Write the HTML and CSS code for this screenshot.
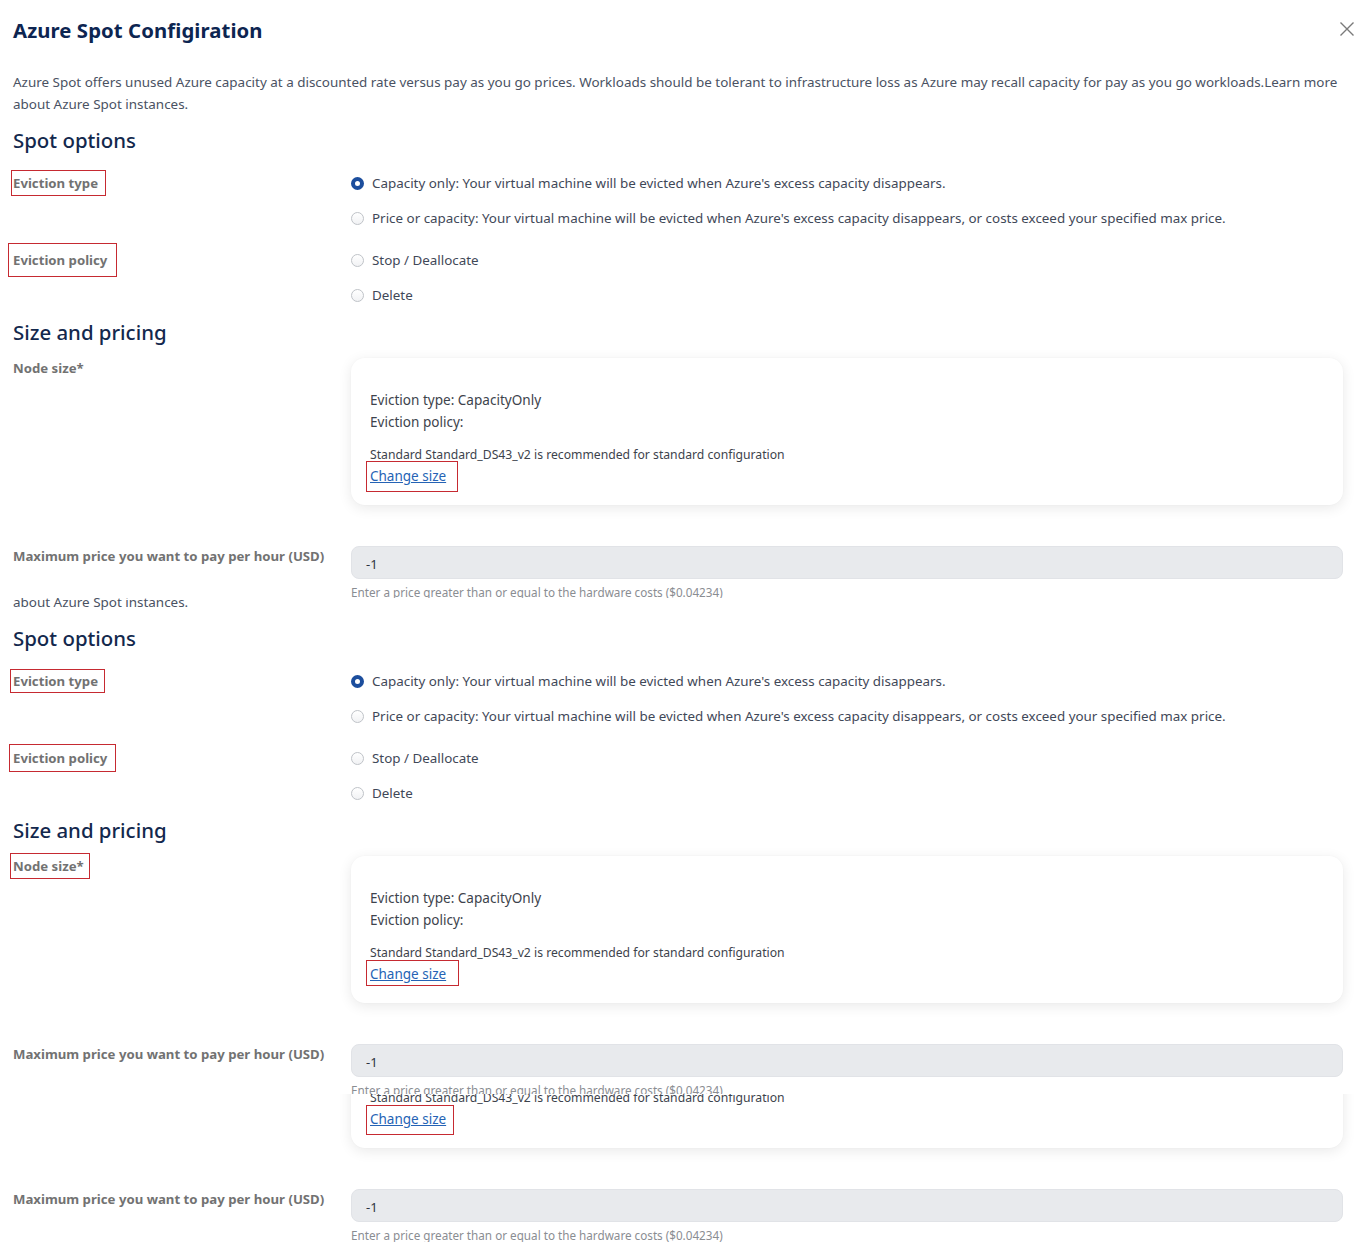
FILE: index.html
```html
<!DOCTYPE html>
<html lang="en">
<head>
<meta charset="utf-8">
<title>Azure Spot Configiration</title>
<link rel="stylesheet" href="styles.css">
</head>
<body>
<div class="shot">

  <!-- slice 1 -->
  <section class="slice slice-1">
    <div class="page">
      <header class="top">
        <h1 class="title">Azure Spot Configiration</h1>
        <button class="close" aria-label="Close">
          <svg width="16" height="16" viewBox="0 0 16 16"><path d="M1.5 1.5 L14.5 14.5 M14.5 1.5 L1.5 14.5" stroke="#7a7a7a" stroke-width="1.4" fill="none"/></svg>
        </button>
      </header>
      <p class="desc">Azure Spot offers unused Azure capacity at a discounted rate versus pay as you go prices. Workloads should be tolerant to infrastructure loss as Azure may recall capacity for pay as you go workloads.Learn more about Azure Spot instances.</p>

      <h2 class="section">Spot options</h2>
      <div class="row">
        <div class="label"><span class="mark mark-type">Eviction type</span></div>
        <div class="ctrl options">
          <label class="opt"><span class="radio on"></span>Capacity only: Your virtual machine will be evicted when Azure's excess capacity disappears.</label>
          <label class="opt"><span class="radio"></span>Price or capacity: Your virtual machine will be evicted when Azure's excess capacity disappears, or costs exceed your specified max price.</label>
        </div>
      </div>
      <div class="row row-policy">
        <div class="label"><span class="mark mark-policy">Eviction policy</span></div>
        <div class="ctrl options">
          <label class="opt"><span class="radio"></span>Stop / Deallocate</label>
          <label class="opt"><span class="radio"></span>Delete</label>
        </div>
      </div>

      <h2 class="section section-size">Size and pricing</h2>
      <div class="row row-node">
        <div class="label"><span class="plain">Node size*</span></div>
        <div class="ctrl">
          <div class="card">
            <p class="card-line">Eviction type: CapacityOnly</p>
            <p class="card-line">Eviction policy:</p>
            <p class="card-rec">Standard Standard_DS43_v2 is recommended for standard configuration</p>
            <span class="mark mark-link mark-link-a"><a class="link" href="#">Change size</a></span>
          </div>
        </div>
      </div>
      <div class="row row-price">
        <div class="label"><span class="plain">Maximum price you want to pay per hour (USD)</span></div>
        <div class="ctrl">
          <div class="input">-1</div>
          <p class="help">Enter a price greater than or equal to the hardware costs ($0.04234)</p>
        </div>
      </div>
    </div>
  </section>

  <!-- slice 2 -->
  <section class="slice slice-2">
    <div class="page">
      <header class="top">
        <h1 class="title">Azure Spot Configiration</h1>
      </header>
      <p class="desc">Azure Spot offers unused Azure capacity at a discounted rate versus pay as you go prices. Workloads should be tolerant to infrastructure loss as Azure may recall capacity for pay as you go workloads.Learn more about Azure Spot instances.</p>

      <h2 class="section">Spot options</h2>
      <div class="row">
        <div class="label"><span class="mark mark-type mark-type-b">Eviction type</span></div>
        <div class="ctrl options">
          <label class="opt"><span class="radio on"></span>Capacity only: Your virtual machine will be evicted when Azure's excess capacity disappears.</label>
          <label class="opt"><span class="radio"></span>Price or capacity: Your virtual machine will be evicted when Azure's excess capacity disappears, or costs exceed your specified max price.</label>
        </div>
      </div>
      <div class="row row-policy">
        <div class="label"><span class="mark mark-policy mark-policy-b">Eviction policy</span></div>
        <div class="ctrl options">
          <label class="opt"><span class="radio"></span>Stop / Deallocate</label>
          <label class="opt"><span class="radio"></span>Delete</label>
        </div>
      </div>

      <h2 class="section section-size">Size and pricing</h2>
      <div class="row row-node">
        <div class="label"><span class="mark mark-node">Node size*</span></div>
        <div class="ctrl">
          <div class="card">
            <p class="card-line">Eviction type: CapacityOnly</p>
            <p class="card-line">Eviction policy:</p>
            <p class="card-rec">Standard Standard_DS43_v2 is recommended for standard configuration</p>
            <span class="mark mark-link mark-link-b"><a class="link" href="#">Change size</a></span>
          </div>
        </div>
      </div>
      <div class="row row-price">
        <div class="label"><span class="plain">Maximum price you want to pay per hour (USD)</span></div>
        <div class="ctrl">
          <div class="input">-1</div>
          <p class="help">Enter a price greater than or equal to the hardware costs ($0.04234)</p>
        </div>
      </div>
    </div>
  </section>

  <!-- slice 3 -->
  <section class="slice slice-3">
    <div class="page">
      <header class="top">
        <h1 class="title">Azure Spot Configiration</h1>
      </header>
      <p class="desc">Azure Spot offers unused Azure capacity at a discounted rate versus pay as you go prices. Workloads should be tolerant to infrastructure loss as Azure may recall capacity for pay as you go workloads.Learn more about Azure Spot instances.</p>

      <h2 class="section">Spot options</h2>
      <div class="row">
        <div class="label"><span class="plain">Eviction type</span></div>
        <div class="ctrl options">
          <label class="opt"><span class="radio on"></span>Capacity only: Your virtual machine will be evicted when Azure's excess capacity disappears.</label>
          <label class="opt"><span class="radio"></span>Price or capacity: Your virtual machine will be evicted when Azure's excess capacity disappears, or costs exceed your specified max price.</label>
        </div>
      </div>
      <div class="row row-policy">
        <div class="label"><span class="plain">Eviction policy</span></div>
        <div class="ctrl options">
          <label class="opt"><span class="radio"></span>Stop / Deallocate</label>
          <label class="opt"><span class="radio"></span>Delete</label>
        </div>
      </div>

      <h2 class="section section-size">Size and pricing</h2>
      <div class="row row-node">
        <div class="label"><span class="plain">Node size*</span></div>
        <div class="ctrl">
          <div class="card">
            <p class="card-line">Eviction type: CapacityOnly</p>
            <p class="card-line">Eviction policy:</p>
            <p class="card-rec">Standard Standard_DS43_v2 is recommended for standard configuration</p>
            <span class="mark mark-link mark-link-c"><a class="link" href="#">Change size</a></span>
          </div>
        </div>
      </div>
      <div class="row row-price">
        <div class="label"><span class="plain">Maximum price you want to pay per hour (USD)</span></div>
        <div class="ctrl">
          <div class="input">-1</div>
          <p class="help">Enter a price greater than or equal to the hardware costs ($0.04234)</p>
        </div>
      </div>
    </div>
  </section>

</div>
</body>
</html>
```

FILE: styles.css
```css
* { box-sizing: border-box; }

html, body {
  margin: 0;
  padding: 0;
  background: #ffffff;
}

body {
  font-family: "Noto Sans", "Open Sans", "Liberation Sans", sans-serif;
  color: #434b58;
  width: 1366px;
  height: 1242px;
  overflow: hidden;
}

.shot {
  display: flex;
  flex-direction: column;
}

.slice {
  overflow: hidden;
  position: relative;
  flex: none;
}

.slice-1 { height: 598px; }
.slice-2 { height: 496px; }
.slice-3 { height: 148px; }

.slice-2 .page { margin-top: -100px; }
.slice-3 .page { margin-top: -451px; }

.page {
  padding: 18px 23px 40px 13px;
}

/* header */
.top {
  display: flex;
  justify-content: space-between;
  align-items: center;
  height: 24px;
}

.title {
  margin: 0;
  font-size: 20.3px;
  line-height: 24px;
  font-weight: 700;
  color: #0d2551;
  letter-spacing: 0.1px;
}

.close {
  border: 0;
  background: none;
  padding: 0;
  width: 16px;
  height: 16px;
  margin-right: -12px;
  margin-top: -2px;
  display: flex;
}

.desc {
  margin: 29px 0 0;
  font-size: 13.45px;
  line-height: 22px;
  color: #4a5263;
  max-width: 1340px;
}

.section {
  margin: 11px 0 0;
  font-size: 20.4px;
  line-height: 28px;
  font-weight: 500;
  color: #13284d;
}

.section-size { margin-top: 13px; }

/* rows */
.row {
  display: grid;
  grid-template-columns: 338px 1fr;
  margin-top: 19px;
}

.row-policy { margin-top: 22px; }
.row-node { margin-top: 12px; }
.row-price { margin-top: 41px; }

.label {
  font-size: 13.2px;
  line-height: 20px;
  font-weight: 700;
  color: #727272;
}

.plain { display: inline-block; }

.mark {
  display: inline-block;
  border: 1px solid #c62a31;
}

.mark-type   { margin: -4px 0 0 -2px; padding: 2px 7px 2px 1px; }
.mark-type-b { margin: -2px 0 0 -3px; padding: 1px 6px 1px 2px; }
.mark-policy { margin: -8px 0 0 -5px; padding: 6px 9px 6px 4px; }
.mark-policy-b { margin: -5px 0 0 -4px; padding: 3px 8px 3px 3px; }
.mark-node   { margin: -4px 0 0 -3px; padding: 2px 5px 2px 2px; }

.options {
  display: flex;
  flex-direction: column;
  gap: 15px;
}

.opt {
  display: flex;
  align-items: center;
  gap: 8px;
  font-size: 13.4px;
  line-height: 20px;
  color: #3f4858;
}

.radio {
  width: 13px;
  height: 13px;
  border-radius: 50%;
  border: 1px solid #bfc3c8;
  background: linear-gradient(#ffffff, #f1f2f4);
  flex: none;
}

.radio.on {
  border: 4px solid #1c4e9d;
  background: #ffffff;
}

/* card */
.card {
  background: #ffffff;
  border-radius: 14px;
  box-shadow: 0 3px 14px rgba(0, 0, 0, 0.09), 0 0 2px rgba(0, 0, 0, 0.03);
  height: 147px;
  padding: 31px 19px 0;
}

.card-line {
  margin: 0;
  font-size: 13.55px;
  line-height: 22px;
  color: #3d434c;
}

.card-rec {
  margin: 13px 0 0;
  font-size: 12.2px;
  line-height: 18px;
  color: #3d434c;
}

.mark-link   { margin: -3px 0 0 -4px; padding: 2px 11px 5px 3px; }
.mark-link-b { padding: 1px 12px 1px 3px; }
.mark-link-c { padding: 1px 7px 5px 3px; }

.link {
  font-size: 13.5px;
  line-height: 20px;
  color: #2563b5;
  text-decoration: underline;
}

/* price */
.input {
  height: 33px;
  background: #e8eaed;
  border: 1px solid #e1e3e7;
  border-radius: 8px;
  padding: 0 14px;
  display: flex;
  align-items: center;
  padding-top: 2px;
  font-size: 13px;
  color: #2f3540;
}

.help {
  margin: 6px 0 0;
  font-size: 11.7px;
  line-height: 14px;
  color: #8a8d92;
}
```
